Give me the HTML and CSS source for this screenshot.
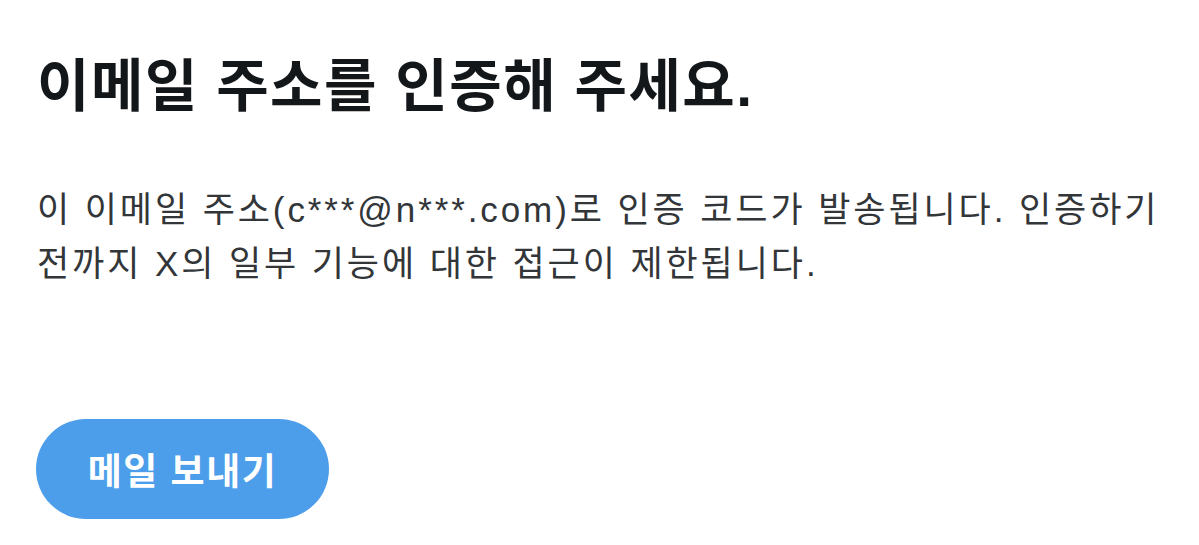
FILE: index.html
```html
<!DOCTYPE html>
<html lang="ko">
<head>
<meta charset="utf-8">
<link rel="stylesheet" href="styles.css">
</head>
<body>
<main class="page">
  <h1 class="title">이메일 주소를 인증해 주세요.</h1>
  <p class="desc">이 이메일 주소(c***@n***.com)로 인증 코드가 발송됩니다. 인증하기 전까지 X의 일부 기능에 대한 접근이 제한됩니다.</p>
  <button class="send">메일 보내기</button>
</main>
</body>
</html>
```
FILE: styles.css
```css
html, body {
  margin: 0;
  padding: 0;
  background: #ffffff;
}
.page {
  width: 1199px;
  height: 545px;
  box-sizing: border-box;
  padding: 48px 20px 0 37px;
  font-family: "Liberation Sans", "Noto Sans CJK KR", sans-serif;
  display: flex;
  flex-direction: column;
  align-items: flex-start;
}
.title {
  margin: 0;
  font-size: 57px;
  line-height: 76px;
  font-weight: 700;
  color: #14171a;
  letter-spacing: 1.5px;
}
.desc {
  margin: 59px 0 0 0;
  width: 1140px;
  font-size: 35px;
  line-height: 54px;
  color: #333639;
  letter-spacing: 2.9px;
  word-break: keep-all;
}
.send {
  margin-top: 128px;
  margin-left: -1px;
  width: 293px;
  height: 100px;
  border: none;
  border-radius: 50px;
  background: #4c9eea;
  color: #ffffff;
  font-family: "Liberation Sans", "Noto Sans CJK KR", sans-serif;
  font-size: 37px;
  font-weight: 700;
  letter-spacing: 1.5px;
  padding: 0;
}
```
